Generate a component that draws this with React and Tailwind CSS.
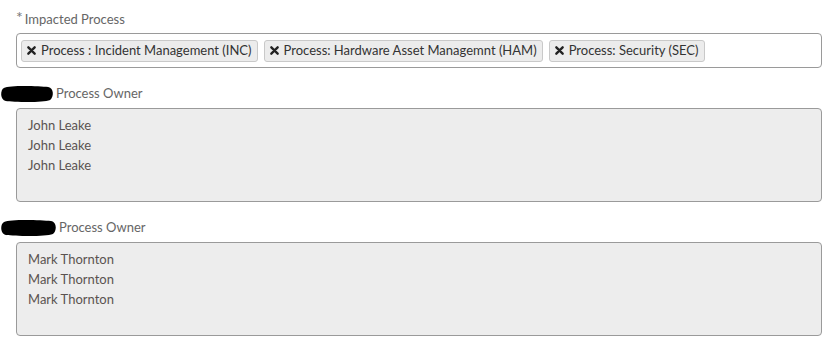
import React from "react";

function Blob({ w }) {
  return (
    <svg width={w} height="18" viewBox="0 0 56 18" className="shrink-0" preserveAspectRatio="none">
      <path d="M4 3 C10 0, 40 1, 50 2 C56 3, 56 12, 52 15 C44 18, 14 17, 6 16 C0 15, 0 5, 4 3 Z" fill="#000" />
    </svg>
  );
}

function Tag({ children }) {
  return (
    <span className="flex items-center h-[22px] px-[5px] gap-[5px] bg-[#ececec] border border-[#c9c9c9] rounded-[3px] text-[13px] text-[#333]">
      <svg width="9" height="9" viewBox="0 0 10 10">
        <path d="M1.5 1.5 L8.5 8.5 M8.5 1.5 L1.5 8.5" stroke="#222" strokeWidth="2.6" strokeLinecap="round" />
      </svg>
      <span>{children}</span>
    </span>
  );
}

function OwnerBox({ name }) {
  return (
    <div className="ml-[16px] w-[806px] h-[94px] bg-[#ededed] border border-[#9a9a9a] rounded-[4px] pt-[6px] pl-[11px] text-[13px] leading-[20px] text-[#5a5350]">
      <div>{name}</div>
      <div>{name}</div>
      <div>{name}</div>
    </div>
  );
}

export default function App() {
  return (
    <div className="w-[840px] h-[350px] bg-white" style={{ fontFamily: "Lato, 'Source Sans Pro', sans-serif" }}>
      <div className="pt-[10px] pl-[16px] flex items-start text-[13px] text-[#666] h-[28px]">
        <span className="text-[#777] text-[16px] mr-[2px] leading-[14px]">*</span>
        <span className="leading-[18px]">Impacted Process</span>
      </div>
      <div className="mt-[5px] ml-[16px] w-[806px] h-[35px] border border-[#9a9a9a] rounded-[4px] bg-white flex items-center gap-[6px] px-[4px]">
        <Tag>Process : Incident Management (INC)</Tag>
        <Tag>Process: Hardware Asset Managemnt (HAM)</Tag>
        <Tag>Process: Security (SEC)</Tag>
      </div>
      <div className="mt-[17px] flex items-center h-[18px] text-[13px] text-[#666]">
        <Blob w={54} />
        <span className="ml-[2px]">Process Owner</span>
      </div>
      <div className="mt-[5px]">
        <OwnerBox name="John Leake" />
      </div>
      <div className="mt-[17px] flex items-center h-[18px] text-[13px] text-[#666]">
        <Blob w={57} />
        <span className="ml-[2px]">Process Owner</span>
      </div>
      <div className="mt-[5px]">
        <OwnerBox name="Mark Thornton" />
      </div>
    </div>
  );
}
